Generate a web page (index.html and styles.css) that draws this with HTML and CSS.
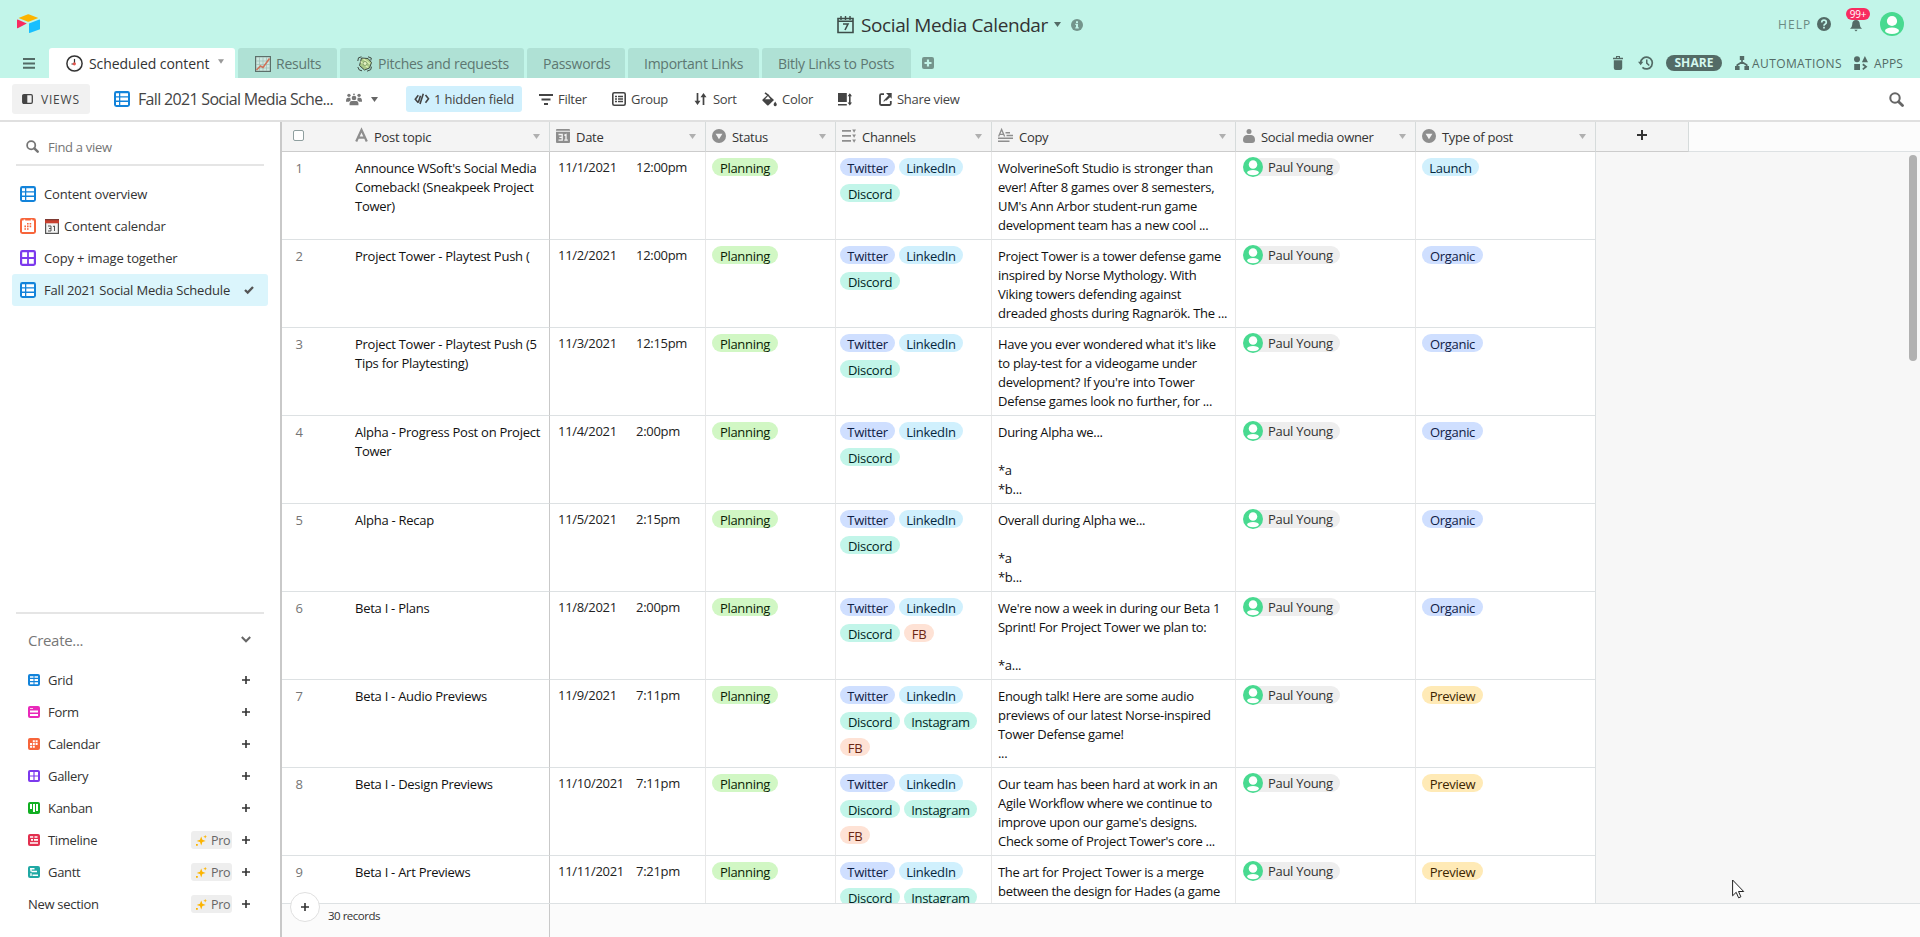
FILE: index.html
```
<!DOCTYPE html>
<html lang="en">
<head>
<meta charset="utf-8">
<title>Social Media Calendar</title>
<link rel="stylesheet" href="styles.css">
</head>
<body>
<svg class="defs" aria-hidden="true">
  <symbol id="caret" viewBox="0 0 7 5"><path d="M0 0h7L3.5 5z" fill="currentColor"/></symbol>
  <symbol id="plus" viewBox="0 0 10 10"><path d="M4 0h2v4h4v2H6v4H4V6H0V4h4z" fill="currentColor"/></symbol>
  <symbol id="search" viewBox="0 0 14 14"><circle cx="5.6" cy="5.6" r="4.4" fill="none" stroke="currentColor" stroke-width="1.9"/><path d="M9 9l3.6 3.6" stroke="currentColor" stroke-width="2.6" stroke-linecap="round"/></symbol>
  <symbol id="grid-view" viewBox="0 0 16 16"><rect width="16" height="16" rx="2.4" fill="#1283da"/><path d="M2 2.2h3v3H2zM6.3 2.2H14v3H6.3zM2 6.6h3v3H2zM6.3 6.6H14v3H6.3zM2 11h3v3H2zM6.3 11H14v3H6.3z" fill="#fff"/></symbol>
  <symbol id="cal-view" viewBox="0 0 16 16"><rect width="16" height="16" rx="2.4" fill="#f7653b"/><path d="M2 2.6h1.6V1.4h1.6v1.2h5.6V1.4h1.6v1.2H14V14H2z" fill="#fff"/><path d="M7 5h1.600v1.600H7zM9.600 5h1.600v1.600H9.600zM4.400 7.600h1.600v1.600H4.400zM7 7.600h1.600v1.600H7zM9.600 7.600h1.600v1.600H9.600zM4.400 10.200h1.600v1.600H4.400zM7 10.200h1.600v1.600H7z" fill="#f7653b"/></symbol>
  <symbol id="gallery-view" viewBox="0 0 16 16"><rect width="16" height="16" rx="2.4" fill="#7c39ed"/><path d="M2.2 2.2h4.9v4.9H2.2zM8.9 2.2h4.9v4.9H8.9zM2.2 8.9h4.9v4.9H2.2zM8.9 8.9h4.9v4.9H8.9z" fill="#fff"/></symbol>
  <symbol id="user" viewBox="0 0 24 24"><circle cx="12" cy="12" r="12" fill="#48da90"/><circle cx="12" cy="9" r="5.1" fill="#fff"/><ellipse cx="12" cy="18.7" rx="7" ry="3.2" fill="#fff"/></symbol>
  <symbol id="single" viewBox="0 0 14 14"><circle cx="7" cy="7" r="7" fill="#8e8e8e"/><path d="M3.6 4.7h6.8L7 10.3z" fill="#f4f4f4"/></symbol>
  <symbol id="sparkle" viewBox="0 0 11 11"><path d="M5.200 1.400l1.200 3.300 3.300 1.200-3.300 1.200-1.200 3.300L4 7.100.7 5.900 4 4.700z" fill="#fcb400"/><path d="M9.200-.2l.5 1.400 1.400.5-1.400.5-.5 1.400-.5-1.400-1.400-.5 1.400-.5zM0 8.900h1.800v1.800H0z" fill="#fcb400"/></symbol>
</svg>

<header class="top">
  <div class="bar">
    <svg class="logo" viewBox="0 0 23 19"><path d="M1.500 4L10.300.4q1-.4 2 0L21.300 4l-9 3.600q-1 .4-2 0z" fill="#fcb400"/><path d="M12 9.500L22.300 5.600q.7-.2.7.4v9.200L12.600 19q-.6.2-.6-.4z" fill="#18bfff"/><path d="M0 6q0-.7.700-.4L9.800 9.500.700 14.200q-.7.3-.7-.4z" fill="#f82b60"/></svg>
    <div class="base-title">
      <svg width="17" height="18" viewBox="0 0 17 18"><path d="M1 2.500h15v14H1z" fill="none" stroke="#3d4d49" stroke-width="1.600"/><path d="M1 5.300h15M4 0v4M8.500 0v4M13 0v4" stroke="#3d4d49" stroke-width="1.400"/><path d="M6 8h5L8 14" fill="none" stroke="#3d4d49" stroke-width="1.600"/></svg>
      <h1>Social Media Calendar</h1>
      <svg class="t-caret" width="7" height="5"><use href="#caret"/></svg>
      <svg class="info" width="12" height="12" viewBox="0 0 12 12"><circle cx="6" cy="6" r="6" fill="#74958c"/><path d="M5 2.200h2v1.700H5zM4.300 4.800H7v3.500h.8v1.200H4.300V8.300H5V6h-.7z" fill="#c2f5e9"/></svg>
    </div>
    <div class="account">
      <span class="help">HELP</span>
      <svg class="q" width="14" height="14" viewBox="0 0 14 14"><circle cx="7" cy="7" r="7" fill="#536b66"/><path d="M4.700 5.500Q4.800 3.200 7 3.200t2.300 2Q9.300 6.300 8.200 7 7 7.600 7 8.700M7 9.800v1.700" fill="none" stroke="#c2f5e9" stroke-width="1.700"/></svg>
      <div class="bell"><svg width="12" height="12" viewBox="0 0 12 12"><path d="M6 0q3.800 0 3.800 4.500Q9.800 7 12 8.800H0Q2.200 7 2.200 4.500 2.200 0 6 0zM4.300 9.800h3.400L6 11.600z" fill="#536b66"/></svg><b>99+</b></div>
      <svg width="24" height="24"><use href="#user"/></svg>
    </div>
  </div>
  <div class="tabs">
    <svg class="menu" width="12" height="11" viewBox="0 0 12 11"><path d="M0 1.100h12M0 5.400h12M0 9.700h12" stroke="#536b66" stroke-width="2"/></svg>
    <div class="tab on t1"><svg width="17" height="17" viewBox="0 0 17 17"><circle cx="8.500" cy="8.500" r="7.600" fill="#fff" stroke="#333" stroke-width="1.500"/><path d="M8.500 3v.1M8.500 14v.1M3 8.500h.1M14 8.500h.1M5.700 3.700h.1M11.200 3.700h.1M13.300 5.700v.1M13.300 11.300v.1M3.700 11.300v.1M5.700 13.300h.1M11.200 13.300h.1" stroke="#777" stroke-width="1"/><path d="M8.500 4v5H5.500" fill="none" stroke="#333" stroke-width="1.200"/><circle cx="8.300" cy="8.800" r="1.600" fill="#e2564e"/></svg><span>Scheduled content</span><svg class="tcar" width="6" height="5"><use href="#caret"/></svg></div>
    <div class="tab t2"><svg width="16" height="16" viewBox="0 0 16 16"><rect x=".6" y=".6" width="14.800" height="14.800" fill="#cde8e0" stroke="#5c6f6a" stroke-width="1.200"/><path d="M1 5h14M1 8.500h14M1 12h14M4.500 1v14M8 1v14M11.500 1v14" stroke="#9fbdb4" stroke-width=".7"/><path d="M1.500 14l4-4 2.500 1.500L14.500 2.500" fill="none" stroke="#cf7259" stroke-width="1.600"/></svg><span>Results</span></div>
    <div class="tab t3"><svg width="16" height="16" viewBox="0 0 16 16"><path d="M4.500 2L11 2.500l3.500 4-2 5.500-5 2-5-4.500z" fill="#a9c987" stroke="#3f4b43" stroke-width="1"/><path d="M3.500 5.500l7.500 6M6.500 3l6.500 5" stroke="#dcefb4" stroke-width="1.400"/><circle cx="8" cy="7.500" r="2" fill="#e4f3c2" stroke="#6b8a55" stroke-width=".7"/><path d="M11 .8l3.300 1.200-.5 2.500M.8 5L1.500 1.800 4.500.8M10 15.200l3.700-1.500.8-3M.8 11l1.500 3 2.700.8" fill="none" stroke="#3f4b43" stroke-width="1"/></svg><span>Pitches and requests</span></div>
    <div class="tab t4"><span>Passwords</span></div>
    <div class="tab t5"><span>Important Links</span></div>
    <div class="tab t6"><span>Bitly Links to Posts</span></div>
    <svg class="addtab" width="12" height="12" viewBox="0 0 12 12"><rect width="12" height="12" rx="2" fill="#74958c"/><path d="M4.900 2.500h2.200v2.400h2.400v2.200H7.100v2.400H4.900V7.100H2.500V4.900h2.400z" fill="#c2f5e9"/></svg>
    <div class="tools">
      <svg class="trash" width="10" height="14" viewBox="0 0 10 14"><path d="M0 1.700h3V.1h4v1.600h3v1.500H0zM.8 4.300h8.400V12q0 2-2 2H2.800q-2 0-2-2z" fill="#536b66"/><path d="M4 1h2v.8H4z" fill="#c2f5e9"/></svg>
      <svg class="hist" width="15" height="14" viewBox="0 0 15 14"><path d="M2.600 6.800A5.900 5.900 0 1 1 4.400 11.300" fill="none" stroke="#536b66" stroke-width="1.700"/><path d="M0 5.800h5.300L2.700 9.300zM8 3.500h1.500v3.300L11.800 9l-1 1L8 7.500z" fill="#536b66"/></svg>
      <span class="share">SHARE</span>
      <svg class="auto" width="14" height="14" viewBox="0 0 14 14"><path d="M4.800 0h4.400v4H4.800zM0 10h4.600v4H0zM9.400 10H14v4H9.400z" fill="#536b66"/><path d="M7 3v3.500M2.300 11V9L7 6l4.700 3v2" fill="none" stroke="#536b66" stroke-width="1.700"/></svg>
      <span class="autot">AUTOMATIONS</span>
      <svg class="appi" width="14" height="14" viewBox="0 0 14 14"><circle cx="3" cy="3.300" r="3" fill="#536b66"/><path d="M10.900 0L14 6.200H7.900zM.200 8h5.800v6H.2z" fill="#536b66"/><path d="M8.800 8.300l3.200 2.500-3.200 2.600" fill="none" stroke="#536b66" stroke-width="1.800"/></svg>
      <span class="appt">APPS</span>
    </div>
  </div>
</header>

<div class="toolbar">
  <div class="viewsbtn"><svg width="11" height="10" viewBox="0 0 11 10"><rect x=".7" y=".7" width="9.600" height="8.600" rx="1.200" fill="none" stroke="#444" stroke-width="1.300"/><path d="M1 1h4.300v8H1z" fill="#444"/></svg><span>VIEWS</span></div>
  <svg class="vi" width="16" height="16"><use href="#grid-view"/></svg>
  <span class="vname">Fall 2021 Social Media Sche...</span>
  <svg class="people" width="16" height="13" viewBox="0 0 18 14"><g fill="#777"><circle cx="9" cy="5.300" r="2.600"/><path d="M4 13.500Q3.500 8.800 6.500 8.600h5q3 .2 2.500 4.900z"/><circle cx="3.300" cy="2.300" r="1.900"/><circle cx="14.700" cy="2.300" r="1.900"/><circle cx="9" cy="1.200" r="1"/><path d="M0 9.500Q-.2 5 2.500 5h2.300l.5 2.800L3.300 9.500zM18 9.500Q18.200 5 15.500 5h-2.300l-.5 2.800 2 1.700z"/></g></svg>
  <svg class="vcar" width="7" height="5"><use href="#caret"/></svg>
  <div class="hiddenf"><svg width="16" height="12" viewBox="0 0 16 12"><path d="M4.300 2.300L1.300 6.200l3 3.500M11.500 2l3 3.800-3 3.900M9.300.8L6 11M6.500 2.800L4.300 9.500" fill="none" stroke="#444" stroke-width="1.600"/></svg><span>1 hidden field</span></div>
  <svg class="i-f" width="14" height="11" viewBox="0 0 14 11"><path d="M0 1h14M2.500 5.500h9M5 10h4" stroke="#444" stroke-width="2"/></svg><span>Filter</span>
  <svg class="i-g" width="14" height="14" viewBox="0 0 14 14"><rect x=".8" y=".8" width="12.400" height="12.400" rx="1.500" fill="none" stroke="#444" stroke-width="1.600"/><path d="M3 4.500h2M6 4.500h5M3 7h2M6 7h5M3 9.500h2M6 9.500h5" stroke="#444" stroke-width="1.400"/></svg><span>Group</span>
  <svg class="i-s" width="13" height="12" viewBox="0 0 13 12"><path d="M3.500 0v10M9.500 12V2" stroke="#444" stroke-width="1.700"/><path d="M.5 7.700h6L3.500 12zM6.500 4.300h6L9.500 0z" fill="#444"/></svg><span>Sort</span>
  <svg class="i-c" width="15" height="15" viewBox="0 0 15 15"><path d="M3 .8l4 3" stroke="#444" stroke-width="1.600"/><path d="M6 2.500l6 5.500-5.500 5.200q-.7.600-1.400 0L.6 8.800q-.6-.7 0-1.400z" fill="#444"/><path d="M6 4L3 7.200h5.500z" fill="#fff"/><path d="M13.200 9.500q1.800 2.400 1.500 3.500-.4 1.200-1.500 1.200T11.700 13q-.3-1.100 1.500-3.500z" fill="#444"/></svg><span>Color</span>
  <svg class="i-h" width="14" height="13" viewBox="0 0 14 13"><path d="M0 0h8.800v9H0zM0 11h8.800v1.500H0z" fill="#444"/><path d="M11.800 1.500V11" stroke="#444" stroke-width="1.600"/><path d="M9.600 3.200h4.400L11.800.2zM9.600 9.500h4.400l-2.200 3z" fill="#444"/></svg>
  <svg class="i-v" width="13" height="13" viewBox="0 0 13 13"><path d="M5 1.200H2.200Q1 1.200 1 2.400v8.400Q1 12 2.200 12h8.400q1.200 0 1.200-1.200V8" fill="none" stroke="#444" stroke-width="1.800"/><path d="M7 0h5.700v5.800zM4.700 9.300V7.500l4.700-5 1.700 1.700-3.600 3.200H6z" fill="#444"/></svg><span>Share view</span>
  <svg class="i-q" width="15" height="15"><use href="#search"/></svg>
</div>

<div class="main">
  <aside class="side">
    <div class="find"><svg width="13" height="13"><use href="#search"/></svg><span>Find a view</span></div>
    <ul class="views">
      <li><svg width="16" height="16"><use href="#grid-view"/></svg><span>Content overview</span></li>
      <li><svg width="16" height="16"><use href="#cal-view"/></svg><svg class="em" width="14" height="15" viewBox="0 0 14 15"><rect x=".6" y=".6" width="12.800" height="13.800" fill="#f3f3f3" stroke="#555" stroke-width="1.200"/><path d="M0 0h14v4.300H0z" fill="#c8402f"/><path d="M0 0h14v1.300H0z" fill="#7d3a33"/><path d="M3 7h3v5H3M4 9.500h2M8 7.500L9.500 7v5" fill="none" stroke="#555" stroke-width="1"/></svg><span>Content calendar</span></li>
      <li><svg width="16" height="16"><use href="#gallery-view"/></svg><span>Copy + image together</span></li>
      <li class="on"><svg width="16" height="16"><use href="#grid-view"/></svg><span>Fall 2021 Social Media Schedule</span><svg class="chk" width="10" height="8" viewBox="0 0 10 8"><path d="M1 4l2.700 2.600L9 1" fill="none" stroke="#555" stroke-width="2.300"/></svg></li>
    </ul>
    <div class="create">
      <div class="chead"><span>Create...</span><svg width="10" height="7" viewBox="0 0 10 7"><path d="M.8 1L5 5.300 9.200 1" fill="none" stroke="#666" stroke-width="2"/></svg></div>
      <ul>
        <li><svg class="ci" viewBox="0 0 12 12"><rect width="12" height="12" rx="2" fill="#1283da"/><path d="M2 2.200h3.500v1.500H2zM6.500 2.200H10v1.500H6.500zM2 5h3.500v2H2zM6.500 5H10v2H6.500zM2 8.200h3.500v2H2zM6.500 8.200H10v2H6.500z" fill="#fff"/></svg><span>Grid</span><svg class="p"><use href="#plus"/></svg></li>
        <li><svg class="ci" viewBox="0 0 12 12"><rect width="12" height="12" rx="2" fill="#e929ba"/><path d="M2 1.900h3v.8H2zM2 4.500h8v2H2zM2 8h8v2H2z" fill="#fff"/></svg><span>Form</span><svg class="p"><use href="#plus"/></svg></li>
        <li><svg class="ci" viewBox="0 0 12 12"><rect width="12" height="12" rx="2" fill="#f7653b"/><path d="M4.800 2.300h2v2h-2zM7.600 2.300h2v2h-2zM2 5h2v2H2zM4.800 5h2v2h-2zM7.600 5h2v2h-2zM2 7.800h2v2H2zM4.800 7.800h2v2h-2z" fill="#fff"/></svg><span>Calendar</span><svg class="p"><use href="#plus"/></svg></li>
        <li><svg class="ci" viewBox="0 0 12 12"><rect width="12" height="12" rx="2" fill="#7c39ed"/><path d="M2 2h3.400v3.400H2zM6.600 2H10v3.400H6.600zM2 6.600h3.400V10H2zM6.600 6.600H10V10H6.600z" fill="#fff"/></svg><span>Gallery</span><svg class="p"><use href="#plus"/></svg></li>
        <li><svg class="ci" viewBox="0 0 12 12"><rect width="12" height="12" rx="2" fill="#11af22"/><path d="M2 2h2v5H2zM5 2h2v8H5zM8 2h2v7H8z" fill="#fff"/></svg><span>Kanban</span><svg class="p"><use href="#plus"/></svg></li>
        <li><svg class="ci" viewBox="0 0 12 12"><rect width="12" height="12" rx="2" fill="#e2304f"/><path d="M2 2.200h3.200v1.500H2zM6.500 2.200h3v1.500h-3zM3 5h2v1.800H3zM6 5h4v1.800H6zM2 8.200h8v1.500H2z" fill="#fff"/></svg><span>Timeline</span><i class="pro"><svg width="11" height="11"><use href="#sparkle"/></svg>Pro</i><svg class="p"><use href="#plus"/></svg></li>
        <li><svg class="ci" viewBox="0 0 12 12"><rect width="12" height="12" rx="2" fill="#20a8a4"/><path d="M2 2.700h4.500M3.500 5.500H9M3 7.300V10M4.500 9.300H10M3 2.500v3" fill="none" stroke="#fff" stroke-width="1.400"/></svg><span>Gantt</span><i class="pro"><svg width="11" height="11"><use href="#sparkle"/></svg>Pro</i><svg class="p"><use href="#plus"/></svg></li>
        <li><span>New section</span><i class="pro"><svg width="11" height="11"><use href="#sparkle"/></svg>Pro</i><svg class="p"><use href="#plus"/></svg></li>
      </ul>
    </div>
  </aside>

  <section class="grid">
    <div class="row head">
      <div class="c-topic"><i class="cb"></i><svg class="hi" width="13" height="13" viewBox="0 0 13 13"><path d="M1.200 12.500L6.500 1l5.300 11.500M3.200 8.700h6.600" fill="none" stroke="#8e8e8e" stroke-width="2.200"/></svg><span>Post topic</span><svg class="hc"><use href="#caret"/></svg></div>
      <div class="c-date"><svg class="hi" width="14" height="14" viewBox="0 0 14 14"><path d="M0 1q0-1 1-1h12q1 0 1 1v.8H0zM0 2.800h14V13q0 1-1 1H1q-1 0-1-1z" fill="#8e8e8e"/><path d="M2.500 5.500h3.700v5.700H2.500M3.300 8.300h2.800M8.300 6.300l1.700-.8v5.700M8.300 11.200h3.500" fill="none" stroke="#f4f4f4" stroke-width="1.300"/></svg><span>Date</span><svg class="hc"><use href="#caret"/></svg></div>
      <div class="c-status"><svg class="hi" width="14" height="14"><use href="#single"/></svg><span>Status</span><svg class="hc"><use href="#caret"/></svg></div>
      <div class="c-chan"><svg class="hi" width="14" height="14" viewBox="0 0 14 14"><path d="M0 1.800h9M0 6.800h9M0 11.800h9" stroke="#8e8e8e" stroke-width="1.800"/><path d="M10.200.5h3.800L12.100 3.700zM10.200 5.500h3.800l-1.900 3.200zM10.200 10.500h3.800l-1.900 3.200z" fill="#8e8e8e"/></svg><span>Channels</span><svg class="hc"><use href="#caret"/></svg></div>
      <div class="c-copy"><svg class="hi" width="15" height="13" viewBox="0 0 15 13"><path d="M.6 7.500L3.600.5l3 7M1.600 5.300h4" fill="none" stroke="#8e8e8e" stroke-width="1.300"/><path d="M7.500 3.800H12M8.500 6.500H15M0 9.300h15M0 12.200h11.500" stroke="#8e8e8e" stroke-width="1.600"/></svg><span>Copy</span><svg class="hc"><use href="#caret"/></svg></div>
      <div class="c-own"><svg class="hi" width="12" height="14" viewBox="0 0 12 14"><circle cx="6" cy="2.600" r="2.500" fill="#8e8e8e"/><path d="M3.800 6h4.400Q12 6.500 12 11q0 3-3 3H3q-3 0-3-3 0-4.500 3.800-5z" fill="#8e8e8e"/></svg><span>Social media owner</span><svg class="hc"><use href="#caret"/></svg></div>
      <div class="c-type"><svg class="hi" width="14" height="14"><use href="#single"/></svg><span>Type of post</span><svg class="hc"><use href="#caret"/></svg></div>
      <div class="c-add"><svg width="10" height="10"><use href="#plus"/></svg></div>
      <div class="c-rest"></div>
    </div>
    <div class="rows">
      <div class="row"><div class="c-topic"><em>1</em><p>Announce WSoft's Social Media<br>Comeback! (Sneakpeek Project<br>Tower)</p></div><div class="c-date"><span>11/1/2021</span><span>12:00pm</span></div><div class="c-status"><b class="pl">Planning</b></div><div class="c-chan"><b class="tw">Twitter</b><b class="li">LinkedIn</b><b class="di">Discord</b></div><div class="c-copy"><p>WolverineSoft Studio is stronger than<br>ever! After 8 games over 8 semesters,<br>UM's Ann Arbor student-run game<br>development team has a new cool ...</p></div><div class="c-own"><svg width="20" height="20"><use href="#user"/></svg><span>Paul Young</span></div><div class="c-type"><b class="la">Launch</b></div></div>
      <div class="row"><div class="c-topic"><em>2</em><p>Project Tower - Playtest Push (</p></div><div class="c-date"><span>11/2/2021</span><span>12:00pm</span></div><div class="c-status"><b class="pl">Planning</b></div><div class="c-chan"><b class="tw">Twitter</b><b class="li">LinkedIn</b><b class="di">Discord</b></div><div class="c-copy"><p>Project Tower is a tower defense game<br>inspired by Norse Mythology. With<br>Viking towers defending against<br>dreaded ghosts during Ragnarök. The ...</p></div><div class="c-own"><svg width="20" height="20"><use href="#user"/></svg><span>Paul Young</span></div><div class="c-type"><b class="or">Organic</b></div></div>
      <div class="row"><div class="c-topic"><em>3</em><p>Project Tower - Playtest Push (5<br>Tips for Playtesting)</p></div><div class="c-date"><span>11/3/2021</span><span>12:15pm</span></div><div class="c-status"><b class="pl">Planning</b></div><div class="c-chan"><b class="tw">Twitter</b><b class="li">LinkedIn</b><b class="di">Discord</b></div><div class="c-copy"><p>Have you ever wondered what it's like<br>to play-test for a videogame under<br>development? If you're into Tower<br>Defense games look no further, for ...</p></div><div class="c-own"><svg width="20" height="20"><use href="#user"/></svg><span>Paul Young</span></div><div class="c-type"><b class="or">Organic</b></div></div>
      <div class="row"><div class="c-topic"><em>4</em><p>Alpha - Progress Post on Project<br>Tower</p></div><div class="c-date"><span>11/4/2021</span><span>2:00pm</span></div><div class="c-status"><b class="pl">Planning</b></div><div class="c-chan"><b class="tw">Twitter</b><b class="li">LinkedIn</b><b class="di">Discord</b></div><div class="c-copy"><p>During Alpha we...<br><br>*a<br>*b...</p></div><div class="c-own"><svg width="20" height="20"><use href="#user"/></svg><span>Paul Young</span></div><div class="c-type"><b class="or">Organic</b></div></div>
      <div class="row"><div class="c-topic"><em>5</em><p>Alpha - Recap</p></div><div class="c-date"><span>11/5/2021</span><span>2:15pm</span></div><div class="c-status"><b class="pl">Planning</b></div><div class="c-chan"><b class="tw">Twitter</b><b class="li">LinkedIn</b><b class="di">Discord</b></div><div class="c-copy"><p>Overall during Alpha we...<br><br>*a<br>*b...</p></div><div class="c-own"><svg width="20" height="20"><use href="#user"/></svg><span>Paul Young</span></div><div class="c-type"><b class="or">Organic</b></div></div>
      <div class="row"><div class="c-topic"><em>6</em><p>Beta I - Plans</p></div><div class="c-date"><span>11/8/2021</span><span>2:00pm</span></div><div class="c-status"><b class="pl">Planning</b></div><div class="c-chan"><b class="tw">Twitter</b><b class="li">LinkedIn</b><b class="di">Discord</b><b class="fb">FB</b></div><div class="c-copy"><p>We're now a week in during our Beta 1<br>Sprint! For Project Tower we plan to:<br><br>*a...</p></div><div class="c-own"><svg width="20" height="20"><use href="#user"/></svg><span>Paul Young</span></div><div class="c-type"><b class="or">Organic</b></div></div>
      <div class="row"><div class="c-topic"><em>7</em><p>Beta I - Audio Previews</p></div><div class="c-date"><span>11/9/2021</span><span>7:11pm</span></div><div class="c-status"><b class="pl">Planning</b></div><div class="c-chan"><b class="tw">Twitter</b><b class="li">LinkedIn</b><b class="di">Discord</b><b class="in">Instagram</b><b class="fb">FB</b></div><div class="c-copy"><p>Enough talk! Here are some audio<br>previews of our latest Norse-inspired<br>Tower Defense game!<br>...</p></div><div class="c-own"><svg width="20" height="20"><use href="#user"/></svg><span>Paul Young</span></div><div class="c-type"><b class="pr">Preview</b></div></div>
      <div class="row"><div class="c-topic"><em>8</em><p>Beta I - Design Previews</p></div><div class="c-date"><span>11/10/2021</span><span>7:11pm</span></div><div class="c-status"><b class="pl">Planning</b></div><div class="c-chan"><b class="tw">Twitter</b><b class="li">LinkedIn</b><b class="di">Discord</b><b class="in">Instagram</b><b class="fb">FB</b></div><div class="c-copy"><p>Our team has been hard at work in an<br>Agile Workflow where we continue to<br>improve upon our game's designs.<br>Check some of Project Tower's core ...</p></div><div class="c-own"><svg width="20" height="20"><use href="#user"/></svg><span>Paul Young</span></div><div class="c-type"><b class="pr">Preview</b></div></div>
      <div class="row"><div class="c-topic"><em>9</em><p>Beta I - Art Previews</p></div><div class="c-date"><span>11/11/2021</span><span>7:21pm</span></div><div class="c-status"><b class="pl">Planning</b></div><div class="c-chan"><b class="tw">Twitter</b><b class="li">LinkedIn</b><b class="di">Discord</b><b class="in">Instagram</b></div><div class="c-copy"><p>The art for Project Tower is a merge<br>between the design for Hades (a game</p></div><div class="c-own"><svg width="20" height="20"><use href="#user"/></svg><span>Paul Young</span></div><div class="c-type"><b class="pr">Preview</b></div></div>
      <i class="scroll"></i>
    </div>
    <footer class="foot"><div class="fleft">30 records</div><div class="addrow"><svg width="8" height="8"><use href="#plus"/></svg></div></footer>
  </section>
</div>
<svg class="cursor" width="13" height="20" viewBox="0 0 13 20"><path d="M.6 1v15.800l3.600-3.500L6.600 18.800l2.300-1-2.400-5.300h5.200z" fill="#fff" stroke="#222" stroke-width="1"/></svg>
</body>
</html>
```
FILE: styles.css
```
* { box-sizing: border-box; }
body { margin: 0; width: 1920px; height: 937px; overflow: hidden; display: flex; flex-direction: column; font-family: "Open Sans", sans-serif; font-size: 13px; letter-spacing: -.3px; color: #111; background: #fff; white-space: nowrap; }
ul, p, h1 { margin: 0; padding: 0; list-style: none; }
svg { flex: none; display: block; overflow: visible; }
i, em { font-style: normal; }
.defs { position: absolute; width: 0; height: 0; }

.top { height: 78px; background: #c2f5e9; color: #536b66; }
.bar { height: 48px; display: flex; align-items: flex-start; padding: 0 16px 0 17px; }
.logo { width: 23px; height: 19px; margin-top: 14px; }
.base-title { display: flex; align-items: center; margin-left: 797px; height: 49px; }
.base-title h1 { font-size: 19px; font-weight: 500; line-height: 24px; letter-spacing: -.4px; color: #333; margin-left: 7px; padding-top: 1px; width: 193px; }
.info { margin-left: 10px; }
.t-caret { color: #536b66; }
.account { display: flex; align-items: center; height: 48px; margin-left: auto; }
.help { font-size: 12px; letter-spacing: 1.1px; width: 39px; color: #6b8a83; }
.bell { position: relative; margin: 3px 18px 0 19px; }
.bell b { position: absolute; left: -4px; top: -12px; width: 24px; height: 12px; border-radius: 6px; background: #f82b60; color: #fff; font-size: 10px; font-weight: 500; line-height: 12px; text-align: center; }

.tabs { height: 30px; display: flex; align-items: center; padding: 0 17px 0 23px; }
.menu { margin-right: 14px; }
.tab { height: 30px; display: flex; align-items: center; margin-right: 3px; padding: 0 0 0 16px; background: #afe1d5; border-radius: 3px 3px 0 0; font-size: 14px; letter-spacing: -.25px; color: #5d7771; }
.tab svg { margin-right: 6px; margin-top: 1px; }
.tab.on { background: #fff; color: #333; font-weight: 500; letter-spacing: -.08px; padding-left: 17px; }
.tab .tcar { margin: -4px 0 0 9px; color: #999; }
.t1 { width: 186px; } .t2 { width: 99px; } .t3 { width: 184px; } .t4 { width: 98px; } .t5 { width: 131px; } .t6 { width: 149px; }
.tab.t2, .tab.t3 { padding-left: 17px; }
.tab.t2 svg, .tab.t3 svg { margin-right: 5px; }
.addtab { margin: 0 0 0 8px; }
.tools { margin-left: auto; display: flex; align-items: center; font-size: 13px; height: 30px; }
.hist { margin-left: 15px; }
.share { margin-left: 13px; width: 56px; height: 16px; border-radius: 8px; background: #536b66; color: #d4f8ef; font-size: 12px; line-height: 16px; font-weight: 700; text-align: center; letter-spacing: .1px; }
.auto { margin-left: 13px; }
.autot { margin-left: 3px; width: 102px; font-size: 12px; letter-spacing: .4px; }
.appt { margin-left: 6px; width: 29px; font-size: 12px; letter-spacing: .1px; }

.toolbar { height: 44px; border-bottom: 2px solid #e0e0e0; display: flex; align-items: center; padding: 0 16px 0 12px; font-weight: 500; color: #444; }
.toolbar > svg { color: #666; }
.viewsbtn { width: 78px; height: 30px; display: flex; align-items: center; padding-left: 10px; border-radius: 3px; background: #f1f1f1; }
.viewsbtn span { margin-left: 8px; font-size: 12px; letter-spacing: .8px; }
.vi { margin-left: 24px; }
.vname { margin-left: 8px; width: 208px; font-size: 16px; font-weight: 400; letter-spacing: -.68px; color: #444; }
.vcar { margin: 0 28px 0 9px; }
.hiddenf { width: 116px; height: 26px; display: flex; align-items: center; padding-left: 8px; border-radius: 3px; background: #d0f0fd; margin-right: 17px; letter-spacing: -.2px; }
.hiddenf span { margin-left: 4px; }
.i-f + span { margin-left: 5px; width: 54px; }
.i-g + span { margin-left: 5px; width: 63px; }
.i-s + span { margin-left: 6px; width: 49px; }
.i-c + span { margin-left: 5px; width: 56px; }
.i-h { margin-right: 27px; }
.i-v + span { margin-left: 5px; }
.i-q { margin-left: auto; }

.main { flex: 1; display: flex; min-height: 0; }
.side { width: 282px; border-right: 2px solid #c9c9c9; display: flex; flex-direction: column; padding: 0 16px 17px; color: #333; }
.find { height: 44px; border-bottom: 2px solid #e5e5e5; display: flex; align-items: center; padding: 7px 0 0 10px; color: #757575; }
.find span { margin-left: 9px; }
.views { margin: 12px -4px 0; font-weight: 500; letter-spacing: -.17px; }
.views li { height: 32px; display: flex; align-items: center; padding-left: 8px; border-radius: 3px; }
.views li svg + span { margin-left: 8px; }
.views .em { margin-left: 9px; }
.views .em + span { margin-left: 5px; }
.views .on { background: #dbf5fc; }
.chk { margin: 0 14px 0 auto; }
.create { margin-top: auto; border-top: 2px solid #e5e5e5; }
.chead { height: 50px; display: flex; align-items: center; justify-content: space-between; padding: 0 13px 0 12px; font-size: 15px; color: #777; }
.chead span { padding-top: 2px; }
.create li { height: 32px; display: flex; align-items: center; padding: 0 14px 0 12px; font-weight: 500; }
.ci { width: 12px; height: 12px; margin-right: 8px; }
.p { width: 8px; height: 8px; margin-left: auto; color: #333; }
.pro { flex: none; margin-left: auto; width: 41px; height: 18px; background: #eee; border-radius: 3px; display: flex; align-items: center; gap: 4px; padding-left: 5px; color: #666; font-size: 12.5px; font-weight: 400; }
.pro + .p { margin-left: 10px; }

.grid { flex: 1; display: flex; flex-direction: column; background: #f7f7f7; }
.row { display: flex; }
.row > div { border-right: 1px solid #e8e8e8; border-bottom: 1px solid #dde1e3; background: #fff; }
.row > .c-topic { width: 268px; border-right-color: #c9c9c9; letter-spacing: -.26px; }
.c-date { width: 156px; } .c-status { width: 130px; } .c-chan { width: 156px; } .c-copy { width: 244px; } .c-own { width: 180px; } .c-type { width: 180px; }
.row > .c-type { border-right-color: #dde1e3; }
.head { height: 30px; color: #333; }
.row.head > div { background: #f4f4f4; border-right-color: #d6dbdb; border-bottom-color: #ccc; display: flex; align-items: center; padding-left: 6px; }
.head .hi { margin-top: -2px; }
.head span { margin-left: 6px; padding-top: 1px; }
.head .hc { width: 7px; height: 5px; margin: 0 9px 0 auto; color: #b0b0b0; }
.row.head > .c-topic { padding-left: 11px; }
.cb { width: 11px; height: 11px; border: 1px solid #8f9f9f; border-radius: 2px; background: #fff; margin-top: -3px; margin-right: 51px; }
.head .c-own .hi { margin-left: 1px; }
.row.head > .c-add { width: 93px; justify-content: center; padding: 0 0 3px; }
.row.head > .c-rest { flex: 1; background: #fcfcfc; border-right: 0; border-bottom-color: #dde1e3; }
.rows { position: relative; height: 751px; overflow: hidden; }
.rows .row { height: 88px; }
.rows p { line-height: 19px; padding-top: 7px; }
.rows .c-topic { display: flex; }
.rows em { width: 34px; padding-top: 7px; line-height: 19px; text-align: center; color: #757575; margin-right: 39px; }
.rows .c-date { display: flex; padding: 6px 0 0 8px; line-height: 19px; color: #222; }
.rows .c-date span:first-child { width: 78px; }
.rows .c-status, .rows .c-type { padding: 6px; }
.rows .c-chan { display: flex; flex-wrap: wrap; align-content: flex-start; gap: 8px 4px; padding: 6px 4px; }
.rows b { display: block; height: 18px; border-radius: 9px; font-weight: 400; line-height: 20px; text-align: center; }
.rows .pl { width: 66px; background: #d1f7c4; color: #0b1d05; }
.rows .tw { width: 55px; background: #cfdfff; color: #102046; }
.rows .li { width: 64px; background: #d0f0fd; color: #04283f; }
.rows .di { width: 60px; background: #c2f5e9; color: #012524; }
.rows .in { width: 73px; background: #c2f5e9; color: #012524; }
.rows .fb { width: 30px; background: #fee2d5; color: #6b2613; }
.rows .la { width: 57px; background: #d0f0fd; color: #04283f; }
.rows .or { width: 61px; background: #cfdfff; color: #102046; }
.rows .pr { width: 61px; background: #ffeab6; color: #3b2501; }
.rows .c-copy { padding-left: 6px; }
.rows .c-own { display: flex; padding: 5px 0 0 7px; }
.rows .c-own svg { position: relative; }
.rows .c-own span { margin: 1px 0 0 -10px; width: 87px; height: 18px; padding-left: 15px; border-radius: 0 9px 9px 0; background: #eee; line-height: 18px; color: #333; }
.scroll { position: absolute; right: 3px; top: 3px; width: 8px; height: 206px; border-radius: 4px; background: #b1b1b1; }
.foot { position: relative; flex: 1; border-top: 1px solid #dde1e3; background: #fbfbfb; }
.fleft { width: 268px; height: 33px; border-right: 1px solid #c9c9c9; padding: 4px 0 0 46px; font-size: 11.5px; letter-spacing: -.5px; color: #333; }
.addrow { position: absolute; left: 8px; top: -12px; width: 30px; height: 30px; border: 1px solid #e0e0e0; border-radius: 50%; background: #fff; display: flex; align-items: center; justify-content: center; color: #333; }
.cursor { position: absolute; left: 1732px; top: 879px; }
```
